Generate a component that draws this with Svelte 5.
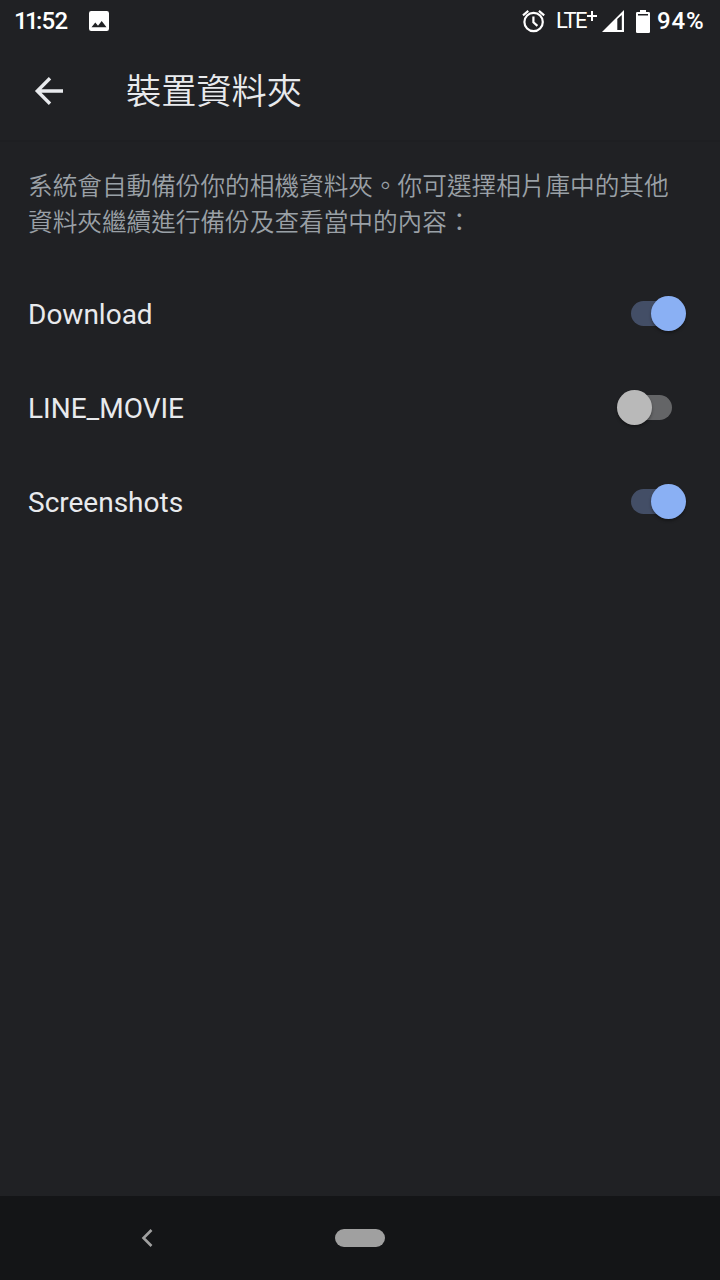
<script>
    let folders = $state([
        { name: "Download", enabled: true },
        { name: "LINE_MOVIE", enabled: false },
        { name: "Screenshots", enabled: true },
    ]);
</script>

<div class="screen">
    <div class="status">
        <span class="time"><span class="hour">11</span>:52</span>
        <svg class="photo" width="20" height="20" viewBox="0 0 20 20">
            <path
                fill="#fff"
                fill-rule="evenodd"
                d="M2.2 0h15.6A2.2 2.2 0 0 1 20 2.2v15.6a2.2 2.2 0 0 1-2.2 2.2H2.2A2.2 2.2 0 0 1 0 17.8V2.2A2.2 2.2 0 0 1 2.2 0zM2.5 16.3h15L12.7 10 9 14.7l-2.700-3.100z"
            />
        </svg>
        <div class="indicators">
            <svg class="alarm" width="24" height="24" viewBox="0 0 24 24">
                <g fill="none" stroke="#fff" stroke-width="2.200">
                    <circle cx="11.600" cy="13" r="9.200" />
                    <path d="M11.400 7.500v5.800l4 3.500" />
                    <path d="M1 6.300l5.300-4.400M22.200 6.300l-5.300-4.400" />
                </g>
            </svg>
            <span class="network">LTE</span>
            <svg class="plus" width="10" height="10" viewBox="0 0 10 10">
                <path fill="none" stroke="#fff" stroke-width="2" d="M5 0v10M0 5h10" />
            </svg>
            <svg class="signal" width="22" height="22" viewBox="0 0 22 22">
                <path
                    fill="#fff"
                    fill-rule="evenodd"
                    d="M22 0v22H0zM15.300 9v11h4.500V5z"
                />
            </svg>
            <svg class="battery" width="14" height="23" viewBox="0 0 14 23">
                <path
                    fill="#fff"
                    d="M4 0h6v2h2.700Q14 2 14 3.300V4H0v-.7Q0 2 1.300 2H4z"
                />
                <path fill="#fff" d="M0 5.500h14v16.200q0 1.300-1.300 1.300H1.300Q0 23 0 21.700z" />
                <path fill="#fff" d="M0 3h2v4H0zM12 3h2v4h-2z" />
            </svg>
            <span class="percent">94%</span>
        </div>
    </div>

    <header>
        <button class="back" aria-label="返回">
            <svg width="30" height="30" viewBox="0 0 30 30">
                <path
                    fill="none"
                    stroke="#e8eaed"
                    stroke-width="3.400"
                    d="M29 15H3.500M16 2.300L3.300 15 16 27.700"
                />
            </svg>
        </button>
        <h1>裝置資料夾</h1>
    </header>

    <main>
        <p>
            系統會自動備份你的相機資料夾。你可選擇相片庫中的其他<br />資料夾繼續進行備份及查看當中的內容：
        </p>
        <ul>
            {#each folders as folder}
                <li>
                    <span>{folder.name}</span>
                    <button
                        class="switch"
                        class:on={folder.enabled}
                        role="switch"
                        aria-checked={folder.enabled}
                        aria-label={folder.name}
                        onclick={() => (folder.enabled = !folder.enabled)}
                    >
                        <span class="thumb"></span>
                    </button>
                </li>
            {/each}
        </ul>
    </main>

    <nav>
        <svg class="nav-back" width="14" height="20" viewBox="0 0 14 20">
            <path
                fill="none"
                stroke="#a0a0a0"
                stroke-width="2.600"
                d="M11.500 2L3.500 10l8 8"
            />
        </svg>
        <span class="home"></span>
    </nav>
</div>

<style>
    :global(body) {
        background: #202124;
    }

    .screen {
        display: flex;
        flex-direction: column;
        height: 1280px;
        overflow: hidden;
        background: #202124;
        color: #e8eaed;
        font-family: Roboto, "Noto Sans CJK TC", sans-serif;
    }

    button {
        border: none;
        padding: 0;
        background: none;
        cursor: pointer;
    }

    svg {
        display: block;
        flex: none;
    }

    .status {
        display: flex;
        align-items: center;
        box-sizing: border-box;
        height: 42px;
        padding: 0 14px;
        color: #fff;
    }

    .time,
    .percent {
        font-size: 24px;
        font-weight: 500;
        line-height: 44px;
        white-space: nowrap;
    }

    .time {
        width: 75px;
        letter-spacing: -0.7px;
    }

    .hour {
        letter-spacing: -2.7px;
    }

    .indicators {
        display: flex;
        align-items: center;
        margin-left: auto;
    }

    .network {
        width: 31px;
        margin-left: 10px;
        font-size: 22px;
        line-height: 40px;
        letter-spacing: -1.5px;
        white-space: nowrap;
    }

    .plus {
        align-self: flex-start;
        margin: 12px 5px 0 0;
    }

    .battery {
        margin: 0 7px 0 12px;
    }

    .percent {
        width: 49px;
        letter-spacing: 0.8px;
    }

    header {
        display: flex;
        align-items: center;
        box-sizing: border-box;
        height: 100px;
        padding-left: 34px;
        border-bottom: 2px solid #1e1f22;
    }

    .back {
        margin-right: 62px;
    }

    h1 {
        margin: 0;
        padding-top: 2px;
        font-size: 35.2px;
        font-weight: 350;
        line-height: 50px;
    }

    main {
        flex: 1;
        padding: 27px 34px 0 28px;
    }

    p {
        margin: 0;
        color: #9aa0a6;
        font-size: 24.65px;
        font-weight: 350;
        line-height: 36px;
        white-space: nowrap;
    }

    ul {
        margin: 26px 0 0;
        padding: 0;
        list-style: none;
    }

    li {
        display: flex;
        align-items: center;
        justify-content: space-between;
        height: 94px;
        font-size: 28px;
    }

    .switch {
        position: relative;
        width: 41px;
        height: 25px;
        margin: 0 14px 2px 0;
        border-radius: 13px;
        background: #646567;
    }

    .thumb {
        position: absolute;
        top: -5px;
        left: -14px;
        width: 35px;
        height: 35px;
        border-radius: 50%;
        background: #b9b9b9;
        box-shadow: 0 2px 3px rgba(0, 0, 0, 0.35);
    }

    .switch.on {
        background: #434e66;
    }

    .switch.on .thumb {
        left: 20px;
        background: #8ab0f4;
    }

    nav {
        display: grid;
        grid-template-columns: 294px 132px 294px;
        align-items: center;
        justify-items: center;
        height: 84px;
        background: #141517;
    }

    .home {
        width: 50px;
        height: 18px;
        border-radius: 9px;
        background: #a0a0a0;
    }
</style>
